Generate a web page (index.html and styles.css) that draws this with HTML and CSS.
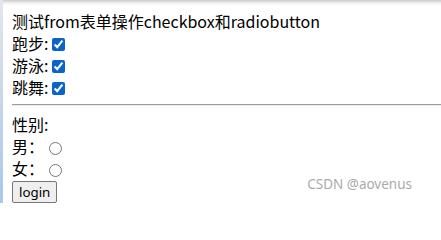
FILE: index.html
```html
<!DOCTYPE html>
<html lang="zh">
<head>
<meta charset="utf-8">
<title>测试from表单</title>
<link rel="stylesheet" href="styles.css">
</head>
<body>
<div class="page">
  <form class="form">
    <div class="title">测试from表单操作checkbox和radiobutton</div>
    <div class="row">跑步:<input type="checkbox" checked></div>
    <div class="row">游泳:<input type="checkbox" checked></div>
    <div class="row">跳舞:<input type="checkbox" checked></div>
    <hr class="rule">
    <div class="row">性别:</div>
    <div class="row">男：<input type="radio" name="sex"></div>
    <div class="row">女：<input type="radio" name="sex"></div>
    <div class="row"><button type="button" class="btn">login</button></div>
  </form>
  <div class="watermark">CSDN @aovenus</div>
</div>
</body>
</html>
```
FILE: styles.css
```css
html, body {
  margin: 0;
  padding: 0;
  background: #ffffff;
}
.page {
  position: relative;
  height: 203px;
  box-sizing: border-box;
  border-left: 3px solid;
  border-image: linear-gradient(to bottom, #e3e7ed, #c6d6ea 50%, #a9c7ec) 1;
  background: linear-gradient(to bottom, #c9c9c9 0px, #e6e6e6 2px, #f8f8f8 4px, #ffffff 6px);
  padding: 10px 0 0 9px;
  overflow: hidden;
}
.form {
  font-family: "Noto Sans CJK SC", "Noto Sans", sans-serif;
  font-size: 16px;
  line-height: 22px;
  color: #000;
  accent-color: #0a63c9;
}
.row, .title {
  height: 22px;
  white-space: nowrap;
}
input[type="checkbox"], input[type="radio"] {
  vertical-align: -1px;
}
input[type="radio"] {
  vertical-align: -2px;
}
.rule {
  margin: 6px 0 7px 0;
  border: 0;
  border-top: 1px solid #9a9a9a;
  border-bottom: 1px solid #eeeeee;
  height: 0;
}
.btn {
  font-family: "Noto Sans", "Open Sans", sans-serif;
  font-size: 13.3px;
  margin-top: 1px;
  padding: 1px 6px;
  background: #efefef;
  border: 1px solid #767676;
  border-radius: 2px;
  color: #000;
}
.watermark {
  position: absolute;
  right: 29px;
  top: 175px;
  font-family: "Noto Sans", "Open Sans", sans-serif;
  font-size: 13.5px;
  color: #aaaaaa;
}
```
